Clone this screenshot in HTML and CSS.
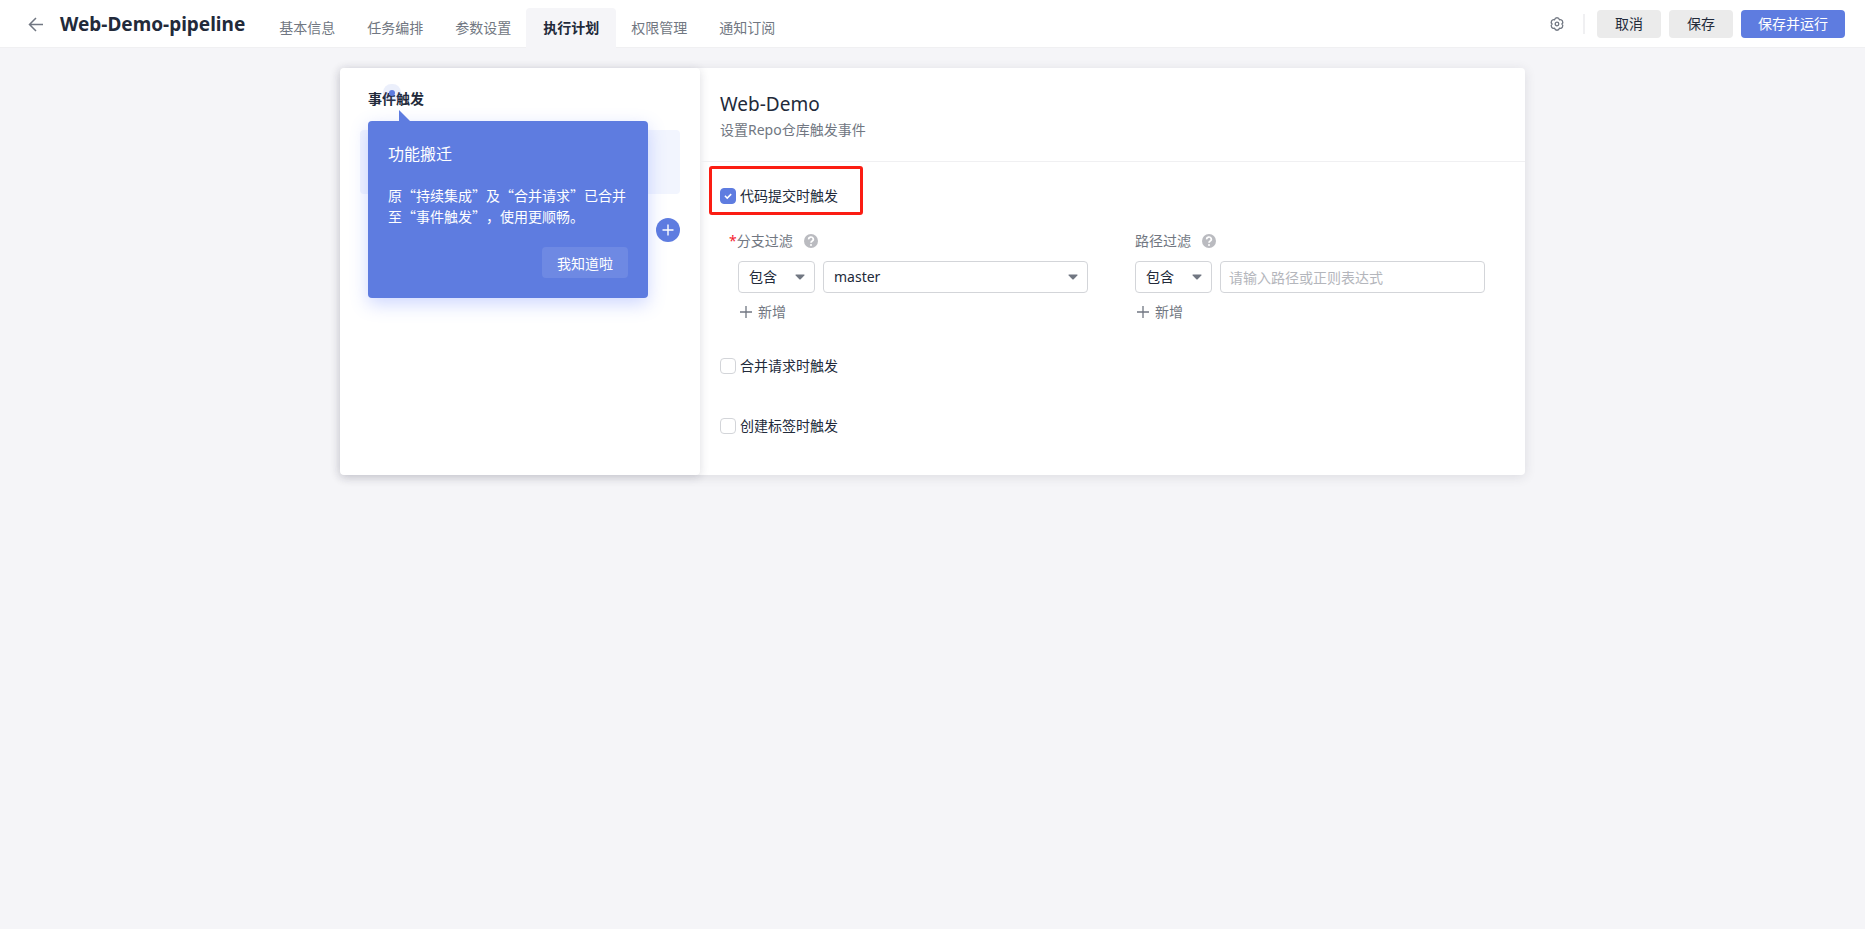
FILE: index.html
```html
<!DOCTYPE html>
<html lang="zh-CN">
<head>
<meta charset="utf-8">
<title>Web-Demo-pipeline</title>
<link rel="stylesheet" href="styles.css">
</head>
<body>
<header class="topbar">
  <button class="back" type="button" aria-label="返回">
    <svg width="16" height="16" viewBox="0 0 16 16" fill="none" stroke="currentColor" stroke-width="1.5"><path d="M15 8.500H1.500M8 2 1.500 8.500 8 15"/></svg>
  </button>
  <h1 class="title">Web-Demo-pipeline</h1>
  <nav class="tabs">
    <a class="tab" href="#">基本信息</a>
    <a class="tab" href="#">任务编排</a>
    <a class="tab" href="#">参数设置</a>
    <a class="tab active" href="#">执行计划</a>
    <a class="tab" href="#">权限管理</a>
    <a class="tab" href="#">通知订阅</a>
  </nav>
  <div class="actions">
    <button class="gear" type="button" aria-label="设置">
      <svg width="16" height="16" viewBox="0 0 16 16" fill="none" stroke="currentColor" stroke-width="1.300" stroke-linejoin="round"><path d="M12.900 8A2.500 2.500 0 0 0 10.450 3.760A2.500 2.500 0 0 0 5.550 3.760A2.500 2.500 0 0 0 3.100 8A2.500 2.500 0 0 0 5.550 12.240A2.500 2.500 0 0 0 10.450 12.240A2.500 2.500 0 0 0 12.900 8z"/><circle cx="8" cy="8" r="1.800"/></svg>
    </button>
    <span class="divider"></span>
    <button class="btn" type="button">取消</button>
    <button class="btn" type="button">保存</button>
    <button class="btn primary" type="button">保存并运行</button>
  </div>
</header>

<main class="card">
  <aside class="side">
    <div class="side-head">
      <h2 class="side-title">事件触发</h2>
      <span class="beacon"></span>
      <div class="popover" role="dialog" aria-labelledby="pop-title">
        <h3 class="pop-title" id="pop-title">功能搬迁</h3>
        <p class="pop-text">原“持续集成”及“合并请求”已合并至“事件触发”，使用更顺畅。</p>
        <button class="pop-btn" type="button">我知道啦</button>
      </div>
    </div>
    <div class="side-item"></div>
    <button class="add-round" type="button" aria-label="添加">
      <svg width="12" height="12" viewBox="0 0 12 12" stroke="currentColor" stroke-width="1.400"><path d="M6 .5v11M.5 6h11"/></svg>
    </button>
  </aside>

  <section class="detail">
    <header class="detail-head">
      <h2 class="detail-title">Web-Demo</h2>
      <p class="detail-sub">设置Repo仓库触发事件</p>
    </header>
    <form class="form">
      <label class="check marked"><input type="checkbox" checked>代码提交时触发</label>
      <div class="filters">
        <div class="filter">
          <div class="filter-label branch"><label for="branch"><span class="req">*</span>分支过滤</label>
            <svg class="help" width="14" height="14" viewBox="0 0 14 14"><circle cx="7" cy="7" r="7" fill="#babbc0"/><path d="M4.700 5.400a2.300 2.200 0 1 1 3.500 1.700c-.8.600-1.200.8-1.200 1.700" fill="none" stroke="#fff" stroke-width="1.700"/><circle cx="7" cy="10.900" r="1" fill="#fff"/></svg>
          </div>
          <div class="row">
            <select class="field mode" aria-label="分支过滤方式"><option>包含</option></select>
            <select class="field wide" id="branch"><option>master</option></select>
          </div>
          <button class="add" type="button"><svg width="12" height="12" viewBox="0 0 12 12" stroke="currentColor" stroke-width="1.300"><path d="M6 0v12M0 6h12"/></svg>新增</button>
        </div>
        <div class="filter">
          <div class="filter-label"><label for="path">路径过滤</label>
            <svg class="help" width="14" height="14" viewBox="0 0 14 14"><circle cx="7" cy="7" r="7" fill="#babbc0"/><path d="M4.700 5.400a2.300 2.200 0 1 1 3.500 1.700c-.8.600-1.200.8-1.200 1.700" fill="none" stroke="#fff" stroke-width="1.700"/><circle cx="7" cy="10.900" r="1" fill="#fff"/></svg>
          </div>
          <div class="row">
            <select class="field mode" aria-label="路径过滤方式"><option>包含</option></select>
            <input class="field wide" id="path" type="text" placeholder="请输入路径或正则表达式">
          </div>
          <button class="add" type="button"><svg width="12" height="12" viewBox="0 0 12 12" stroke="currentColor" stroke-width="1.300"><path d="M6 0v12M0 6h12"/></svg>新增</button>
        </div>
      </div>
      <label class="check"><input type="checkbox">合并请求时触发</label>
      <label class="check"><input type="checkbox">创建标签时触发</label>
    </form>
  </section>
</main>
</body>
</html>
```
FILE: styles.css
```css
* { box-sizing: border-box; }

body {
  margin: 0;
  min-height: 100vh;
  background: #f5f5f8;
  color: #222a3a;
  font: 14px/20px "Noto Sans", "Noto Sans CJK SC", sans-serif;
}

h1, h2, h3, p { margin: 0; }

button, input, select { font: inherit; color: inherit; }
button { border: 0; padding: 0; background: none; cursor: pointer; }

.topbar {
  display: flex;
  align-items: center;
  height: 48px;
  padding: 0 20px 0 28px;
  background: #fff;
  border-bottom: 1px solid #f0f0f2;
}
.back { display: flex; color: #717782; }
.title {
  margin-left: 16px;
  font-size: 19px;
  line-height: 24px;
}
.tabs {
  display: flex;
  align-self: flex-end;
  height: 39px;
  margin: 0 auto 0 18px;
}
.tab {
  display: flex;
  align-items: center;
  padding: 0 16px;
  color: #717782;
  text-decoration: none;
}
.tab.active {
  margin: 0 -1px -1px;
  padding: 0 17px;
  border-radius: 4px 4px 0 0;
  background: #f5f5f8;
  color: #222a3a;
  font-weight: 700;
}
.actions { display: flex; align-items: center; gap: 8px; }
.gear { display: flex; color: #717782; }
.divider { width: 2px; height: 20px; margin: 0 4px 0 10px; background: #f0f0f2; }
.btn {
  height: 28px;
  padding: 0 18px;
  border-radius: 4px;
  background: #ebebeb;
}
.btn.primary { padding: 0 17px; background: #5e7ce0; color: #fff; }

.card {
  display: flex;
  max-width: 1185px;
  min-height: 407px;
  margin: 20px auto;
  border-radius: 4px;
  background: #fff;
  box-shadow: 0 2px 12px rgba(40, 40, 60, .12);
}

.side {
  display: flex;
  flex-direction: column;
  width: 360px;
  padding: 20px;
  border-radius: 4px;
  box-shadow: 0 2px 10px rgba(40, 40, 60, .16);
}
.side-head { position: relative; padding: 0 8px; }
.side-title { font-size: 14px; line-height: 22px; }
.side-item {
  height: 64px;
  margin-top: 20px;
  border-radius: 4px;
  background: #f2f5fe;
}
.add-round {
  display: flex;
  align-items: center;
  justify-content: center;
  align-self: flex-end;
  width: 24px;
  height: 24px;
  margin-top: 24px;
  border-radius: 50%;
  background: #5e7ce0;
  color: #fff;
}

.beacon {
  position: absolute;
  left: 29px;
  top: 2px;
  width: 6px;
  height: 6px;
  border-radius: 50%;
  background: #5e7ce0;
  box-shadow: 0 0 0 6px rgba(94, 124, 224, .12);
}
.popover {
  position: absolute;
  z-index: 1;
  left: 8px;
  top: 33px;
  display: flex;
  flex-direction: column;
  width: 280px;
  padding: 20px;
  border-radius: 4px;
  background: #5e7ce0;
  color: #fff;
  font-family: "Noto Sans CJK SC", sans-serif;
  box-shadow: 0 6px 18px rgba(94, 124, 255, .3);
}
.popover::before {
  content: "";
  position: absolute;
  left: 31px;
  bottom: 100%;
  border-left: 11px solid #5e7ce0;
  border-top: 11px solid transparent;
}
.pop-title { font-size: 16px; line-height: 24px; font-weight: 400; }
.pop-text { margin: 20px 0; line-height: 21px; text-spacing-trim: space-all; }
.pop-btn {
  align-self: flex-end;
  height: 31px;
  padding: 0 15px;
  border-radius: 4px;
  background: #6e89e3;
}

.detail { flex: 1; min-width: 0; }
.detail-head {
  padding: 23px 20px 21px;
  border-bottom: 1px solid #f0f0f2;
}
.detail-title { font-size: 19px; line-height: 26px; font-weight: 400; }
.detail-sub { margin-top: 3px; color: #717782; }

.form {
  display: flex;
  flex-direction: column;
  align-items: flex-start;
  padding: 24px 40px 30px 20px;
}
.check {
  position: relative;
  display: flex;
  align-items: center;
  gap: 4px;
  height: 20px;
}
.check + .check { margin-top: 40px; }
.check input {
  appearance: none;
  width: 16px;
  height: 16px;
  margin: 0;
  border: 1px solid #d3d5d9;
  border-radius: 4px;
  background: #fff;
}
.check input:checked {
  border-color: #5e7ce0;
  background: #5e7ce0 url("data:image/svg+xml,%3Csvg xmlns='http://www.w3.org/2000/svg' viewBox='0 0 14 14'%3E%3Cpath d='M3.900 6.800l2.300 2.300 4-4' fill='none' stroke='%23fff' stroke-width='1.500'/%3E%3C/svg%3E") center / 14px no-repeat;
}
.marked::after {
  content: "";
  position: absolute;
  inset: -20px -25px -9px -11px;
  border: 3px solid #fb1d13;
  border-radius: 3px;
}

.filters {
  display: flex;
  justify-content: space-between;
  align-self: stretch;
  gap: 20px;
  margin: 24px 0 34px;
  padding-left: 18px;
}
.filter { display: flex; flex-direction: column; align-items: flex-start; }
.filter-label {
  display: flex;
  align-items: center;
  gap: 11px;
  height: 22px;
  color: #717782;
}
.branch { margin-left: -9px; }
.req { color: #f5222d; }
.row { display: flex; gap: 8px; margin-top: 9px; }
.field {
  appearance: none;
  height: 32px;
  border: 1px solid #d3d5d9;
  border-radius: 4px;
  background: #fff;
  padding: 0 10px;
}
select.field {
  background: #fff url("data:image/svg+xml,%3Csvg xmlns='http://www.w3.org/2000/svg' viewBox='0 0 10 6'%3E%3Cpath d='M1 .5h8q1 .2.300 1L5.700 5.300q-.7.600-1.400 0L.7 1.500Q0 .7 1 .5' fill='%23717782'/%3E%3C/svg%3E") right 9px center / 10px 6px no-repeat;
}
.mode { width: 77px; }
.wide { width: 265px; }
input.wide { padding: 0 8px; }
.field::placeholder { color: #b4b6bc; opacity: 1; }
.add {
  display: flex;
  align-items: center;
  gap: 6px;
  height: 20px;
  margin: 9px 0 0 2px;
  color: #717782;
}
```
